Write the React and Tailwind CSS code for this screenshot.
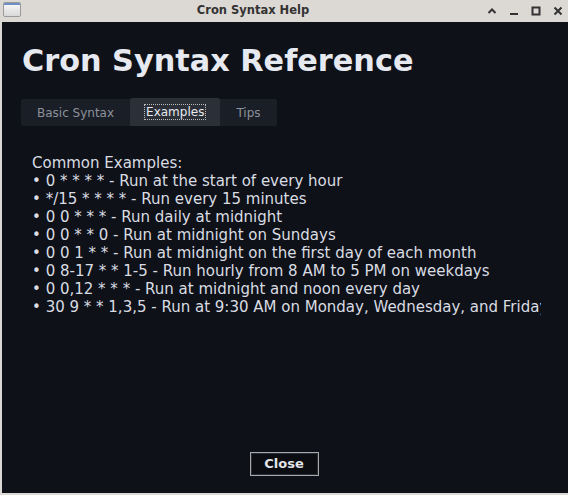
import { useState } from "react";

const examples = [
  "0 * * * * - Run at the start of every hour",
  "*/15 * * * * - Run every 15 minutes",
  "0 0 * * * - Run daily at midnight",
  "0 0 * * 0 - Run at midnight on Sundays",
  "0 0 1 * * - Run at midnight on the first day of each month",
  "0 8-17 * * 1-5 - Run hourly from 8 AM to 5 PM on weekdays",
  "0 0,12 * * * - Run at midnight and noon every day",
  "30 9 * * 1,3,5 - Run at 9:30 AM on Monday, Wednesday, and Friday",
];

const tabs = ["Basic Syntax", "Examples", "Tips"];

export default function App() {
  const [active, setActive] = useState("Examples");

  return (
    <div
      className="w-[568px] h-[495px] flex flex-col overflow-hidden bg-[#dcd8d4]"
      style={{ fontFamily: '"DejaVu Sans", sans-serif' }}
    >
      {/* title bar */}
      <div className="h-[22px] shrink-0 flex items-center relative">
        <div className="absolute left-[3px] top-[2px] w-[18px] h-[15px] rounded-[2px] border border-[#9a9a9a] bg-gradient-to-b from-[#fafafa] to-[#d9d9d9] overflow-hidden">
          <div className="h-[2px] bg-[#6d8fc4]" />
        </div>
        <div className="flex-1 pr-[62px] text-center text-[11.5px] font-bold text-[#333]">
          Cron Syntax Help
        </div>
        <div className="absolute right-[5px] top-0 h-[22px] flex items-center gap-[12px] text-[#333]">
          <svg width="10" height="10" viewBox="0 0 10 10">
            <path d="M1.5 7 L5 3.5 L8.5 7" fill="none" stroke="#333" strokeWidth="2" />
          </svg>
          <svg width="10" height="10" viewBox="0 0 10 10">
            <rect x="1" y="7" width="8" height="2" fill="#333" />
          </svg>
          <svg width="10" height="10" viewBox="0 0 10 10">
            <rect x="1.5" y="1.5" width="7" height="7" fill="none" stroke="#333" strokeWidth="2" />
          </svg>
          <svg width="10" height="10" viewBox="0 0 10 10">
            <path d="M1.5 1.5 L8.5 8.5 M8.5 1.5 L1.5 8.5" stroke="#333" strokeWidth="2" />
          </svg>
        </div>
      </div>

      {/* body */}
      <div className="flex-1 ml-[2px] mb-[2px] bg-[#0e1118] flex flex-col min-h-0">
        <h1 className="mt-[20px] ml-[20px] text-[30.3px] leading-[38px] font-bold text-[#e6e9f0]">
          Cron Syntax Reference
        </h1>

        <div className="mt-[19px] ml-[19px] flex items-end">
          <div className="flex bg-[#1a1e26] rounded-[2px] h-[27px]">
            {tabs.map((t) => (
              <button
                key={t}
                onClick={() => setActive(t)}
                className={
                  t === active
                    ? "h-[28px] -mt-[1px] px-[15px] bg-[#2a2f38] rounded-t-[2px] text-[12px] text-[#e8eaee]"
                    : "h-[27px] px-[16px] text-[12px] text-[#8c919b]"
                }
              >
                <span className={t === active ? "outline outline-1 outline-dotted outline-[#bbb] px-[1px]" : ""}>
                  {t}
                </span>
              </button>
            ))}
          </div>
        </div>

        <div className="mt-[28px] ml-[30px] w-[509px] overflow-hidden text-[15px] leading-[18px] text-[#d9dce2] whitespace-nowrap">
          <div>Common Examples:</div>
          {examples.map((e) => (
            <div key={e}>• {e}</div>
          ))}
        </div>

        <div className="flex-1" />

        <div className="flex justify-center mb-[17px] pr-[2px]">
          <button className="w-[69px] h-[24px] border border-[#a8a8a8] bg-[#0b0d12] shadow-[inset_0_0_0_1px_#2a2d33] text-[13px] font-bold text-[#e2e4e8]">
            Close
          </button>
        </div>
      </div>
    </div>
  );
}
